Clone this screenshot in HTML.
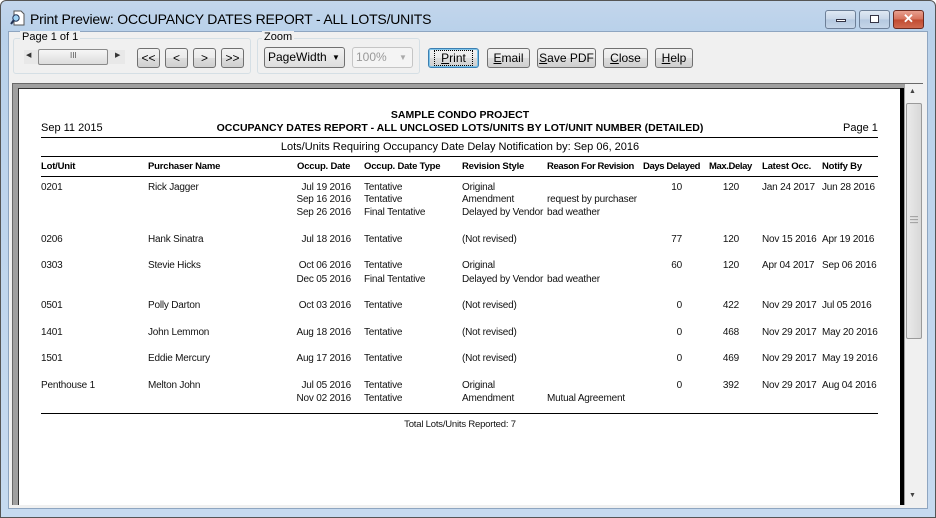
<!DOCTYPE html>
<html><head><meta charset="utf-8"><style>
*{margin:0;padding:0;box-sizing:border-box}
body{width:936px;height:518px;overflow:hidden;font-family:"Liberation Sans",Arial,sans-serif;background:#fff;position:relative}
.a{position:absolute;white-space:nowrap}
#frame{left:0;top:0;width:936px;height:518px;background:linear-gradient(#c3d6ec,#b9d1ea 30px,#c6daf0);border:1px solid #555;border-radius:6px 6px 0 0}
#client{left:8px;top:31px;width:920px;height:478px;background:#f0f0f0;border:1px solid #8ea5c0}
.t{font-size:14px;color:#000;letter-spacing:-0.2px}
.grp{border:1px solid #d5dfe5;border-radius:3px}
.lbl{font-size:11px;background:#f0f0f0;padding:0 2px}
.btn{height:20px;border:1px solid #707070;border-radius:3px;background:linear-gradient(#f2f2f2,#ebebeb 50%,#dddddd 51%,#cfcfcf);font-size:12px;text-align:center;line-height:18px;color:#000}
.cap{height:19px;border:1px solid #6d7f97;border-radius:3px;background:linear-gradient(#dfe8f3,#c7d6e8 50%,#b5c8df 51%,#c5d5e8)}
.p{font-size:10px;color:#111;letter-spacing:-0.2px}
.b{font-weight:bold;font-size:9.5px;color:#000;letter-spacing:-0.2px}
.r{text-align:right}
.ln{height:1px;background:#000;left:41px;width:837px}
</style></head><body>
<div class="a" id="frame"></div>
<svg class="a" style="left:10px;top:10px" width="16" height="16" viewBox="0 0 16 16"><path d="M4 1h7l3 3v11H4z" fill="#fff" stroke="#555"/><circle cx="6" cy="8" r="3.2" fill="#9fd3f5" stroke="#235" /><path d="M3.5 10.5L1 14" stroke="#235" stroke-width="2"/></svg>
<div class="a t" style="left:30px;top:11px">Print Preview: OCCUPANCY DATES REPORT - ALL LOTS/UNITS</div>
<div class="a cap" style="left:825px;top:10px;width:31px"><div class="a" style="left:10px;top:8px;width:10px;height:3px;background:#fff;border:1px solid #334"></div></div>
<div class="a cap" style="left:859px;top:10px;width:31px"><div class="a" style="left:10px;top:4px;width:9px;height:8px;border:1px solid #334;background:#fff"></div></div>
<div class="a cap" style="left:893px;top:10px;width:31px;background:linear-gradient(#e8a08f,#d5705a 50%,#c04a30 51%,#d06a50);border-color:#6b2a20"><div class="a" style="left:9px;top:0px;color:#fff;font-weight:bold;font-size:13px">✕</div></div>
<div class="a" id="client"></div>
<div class="a grp" style="left:13px;top:38px;width:238px;height:36px"></div>
<div class="a lbl" style="left:20px;top:31px">Page 1 of 1</div>
<div class="a" style="left:24px;top:50px;width:101px;height:14px;background:#e8e8e8"></div>
<div class="a" style="left:26px;top:51px;font-size:7px;color:#333">◀</div>
<div class="a" style="left:115px;top:51px;font-size:7px;color:#333">▶</div>
<div class="a" style="left:38px;top:49px;width:70px;height:16px;border:1px solid #8a8a8a;border-radius:2px;background:linear-gradient(#f6f6f6,#dcdcdc)"><div class="a" style="left:31px;top:1px;font-size:8px;color:#555">III</div></div>
<div class="a btn" style="left:137px;top:48px;width:23px">&lt;&lt;</div>
<div class="a btn" style="left:165px;top:48px;width:23px">&lt;</div>
<div class="a btn" style="left:193px;top:48px;width:23px">&gt;</div>
<div class="a btn" style="left:221px;top:48px;width:23px">&gt;&gt;</div>
<div class="a grp" style="left:257px;top:38px;width:163px;height:36px"></div>
<div class="a lbl" style="left:262px;top:31px">Zoom</div>
<div class="a" style="left:264px;top:47px;width:81px;height:21px;border:1px solid #707070;border-radius:3px;background:linear-gradient(#f2f2f2,#ddd);font-size:12px;line-height:19px;padding-left:3px">PageWidth<span style="position:absolute;left:67px;font-size:8px">▼</span></div>
<div class="a" style="left:352px;top:47px;width:61px;height:21px;border:1px solid #c5c5c5;border-radius:3px;background:#f4f4f4;font-size:12px;line-height:19px;padding-left:3px;color:#999">100%<span style="position:absolute;left:46px;font-size:8px;color:#aaa">▼</span></div>
<div class="a btn" style="left:428px;top:48px;width:51px;border-color:#3c7fb1;box-shadow:inset 0 0 0 1px #7ec4ea"><span style="outline:1px dotted #000;padding:0 6px"><u>P</u>rint</span></div>
<div class="a btn" style="left:487px;top:48px;width:43px"><u>E</u>mail</div>
<div class="a btn" style="left:537px;top:48px;width:59px"><u>S</u>ave PDF</div>
<div class="a btn" style="left:603px;top:48px;width:45px"><u>C</u>lose</div>
<div class="a btn" style="left:655px;top:48px;width:38px"><u>H</u>elp</div>
<div class="a" style="left:12px;top:83px;width:911px;height:422px;background:#a0a0a0;border-top:1px solid #696969;border-left:1px solid #696969"></div>
<div class="a" style="left:18px;top:88px;width:886px;height:417px;background:#333"></div>
<div class="a" style="left:19px;top:89px;width:881px;height:416px;background:#fff"></div>
<div class="a" style="left:900px;top:88px;width:4px;height:417px;background:#000"></div>
<div class="a" style="left:905px;top:84px;width:18px;height:421px;background:#f0f0f0"></div>
<div class="a" style="left:909px;top:88px;font-size:7px;color:#444">▲</div>
<div class="a" style="left:909px;top:492px;font-size:7px;color:#444">▼</div>
<div class="a" style="left:906px;top:103px;width:16px;height:236px;border:1px solid #9a9a9a;border-radius:2px;background:linear-gradient(90deg,#eaeaea,#d8d8d8)"></div>
<div class="a" style="left:910px;top:215px;font-size:8px;color:#666;line-height:3px">—<br>—<br>—</div>
<div class="a b" style="left:20px;width:880px;text-align:center;top:109px;font-size:10.5px;letter-spacing:0">SAMPLE CONDO PROJECT</div>
<div class="a b" style="left:20px;width:880px;text-align:center;top:122px;font-size:10.5px;letter-spacing:0">OCCUPANCY DATES REPORT - ALL UNCLOSED LOTS/UNITS BY LOT/UNIT NUMBER (DETAILED)</div>
<div class="a" style="left:41px;top:122px;font-size:11px">Sep 11 2015</div>
<div class="a" style="left:843px;top:122px;font-size:11px">Page 1</div>
<div class="a ln" style="top:137px"></div>
<div class="a" style="left:20px;width:880px;text-align:center;top:141px;font-size:11px">Lots/Units Requiring Occupancy Date Delay Notification by: Sep 06, 2016</div>
<div class="a ln" style="top:156px"></div>
<div class="a b" style="left:41px;top:161px">Lot/Unit</div>
<div class="a b" style="left:148px;top:161px">Purchaser Name</div>
<div class="a b" style="left:297px;top:161px">Occup. Date</div>
<div class="a b" style="left:364px;top:161px">Occup. Date Type</div>
<div class="a b" style="left:462px;top:161px">Revision Style</div>
<div class="a b" style="left:547px;top:161px;letter-spacing:-0.4px">Reason For Revision</div>
<div class="a b" style="left:643px;top:161px;letter-spacing:-0.4px">Days Delayed</div>
<div class="a b" style="left:709px;top:161px;letter-spacing:-0.4px">Max.Delay</div>
<div class="a b" style="left:762px;top:161px">Latest Occ.</div>
<div class="a b" style="left:822px;top:161px">Notify By</div>
<div class="a ln" style="top:176px"></div>
<div id="rows"></div>
<div class="a ln" style="top:413px"></div>
<div class="a p" style="left:20px;width:880px;text-align:center;top:419px;font-size:9.5px">Total Lots/Units Reported: 7</div>
<script>
var R=[
[182,"0201","Rick Jagger","Jul 19 2016","Tentative","Original","","10","120","Jan 24 2017","Jun 28 2016"],
[194,"","","Sep 16 2016","Tentative","Amendment","request by purchaser"],
[207,"","","Sep 26 2016","Final Tentative","Delayed by Vendor","bad weather"],
[234,"0206","Hank Sinatra","Jul 18 2016","Tentative","(Not revised)","","77","120","Nov 15 2016","Apr 19 2016"],
[260,"0303","Stevie Hicks","Oct 06 2016","Tentative","Original","","60","120","Apr 04 2017","Sep 06 2016"],
[274,"","","Dec 05 2016","Final Tentative","Delayed by Vendor","bad weather"],
[300,"0501","Polly Darton","Oct 03 2016","Tentative","(Not revised)","","0","422","Nov 29 2017","Jul 05 2016"],
[327,"1401","John Lemmon","Aug 18 2016","Tentative","(Not revised)","","0","468","Nov 29 2017","May 20 2016"],
[353,"1501","Eddie Mercury","Aug 17 2016","Tentative","(Not revised)","","0","469","Nov 29 2017","May 19 2016"],
[380,"Penthouse 1","Melton John","Jul 05 2016","Tentative","Original","","0","392","Nov 29 2017","Aug 04 2016"],
[393,"","","Nov 02 2016","Tentative","Amendment","Mutual Agreement"]];
var h="";
R.forEach(function(r){var t=r[0];
function L(x,s){if(s)h+='<div class="a p" style="left:'+x+'px;top:'+t+'px">'+s+'</div>';}
function Rt(x,s){if(s)h+='<div class="a p r" style="left:'+(x-80)+'px;width:80px;top:'+t+'px">'+s+'</div>';}
L(41,r[1]);L(148,r[2]);Rt(351,r[3]);L(364,r[4]);L(462,r[5]);L(547,r[6]);Rt(682,r[7]);Rt(739,r[8]);L(762,r[9]);L(822,r[10]);});
document.getElementById("rows").outerHTML=h;
</script>
</body></html>
